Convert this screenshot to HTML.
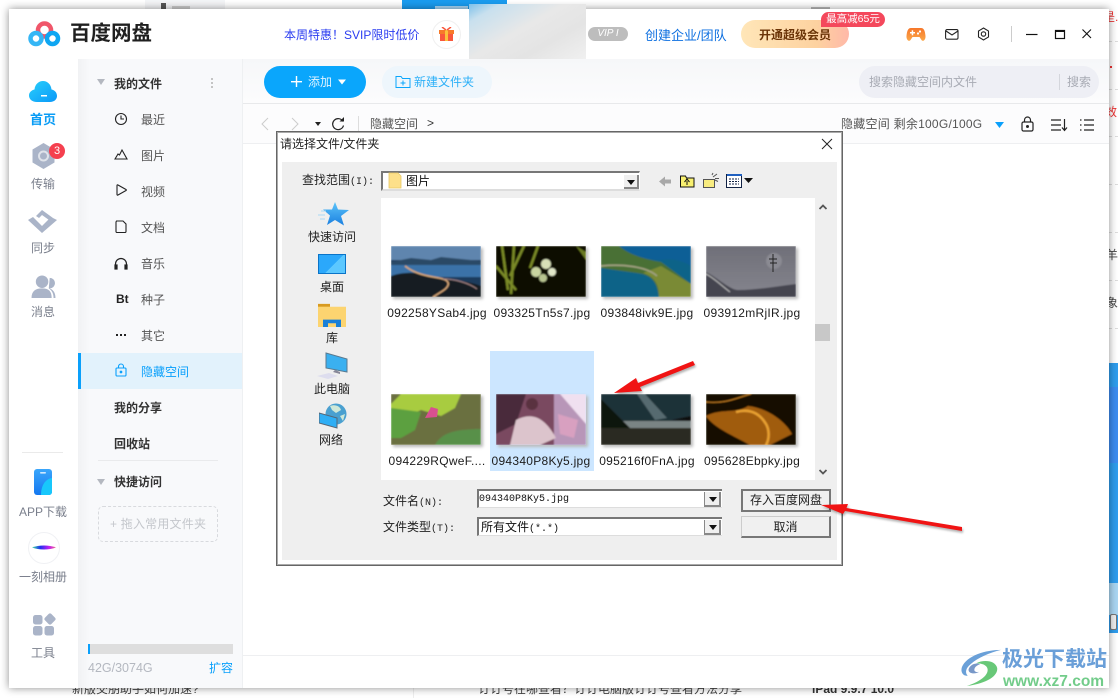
<!DOCTYPE html>
<html><head><meta charset="utf-8"><style>
html,body{margin:0;padding:0;width:1118px;height:698px;overflow:hidden;background:#fff;font-family:"Liberation Sans","Noto Sans CJK SC",sans-serif}
div,span,svg{position:absolute}
tt{font:10px/16px "Liberation Mono",monospace}
.t{white-space:nowrap;font-size:12px;line-height:16px;color:#444}
.n{color:#7a7f8c;text-align:center;width:68px;left:9px}
.m{left:141px;color:#555}
.b{font-weight:700;color:#333}
.d{color:#222}
.c{font-size:12px;color:#222;white-space:nowrap;line-height:16px;text-align:center;width:104px}
.f{letter-spacing:.28px;color:#1c1c1c}
.th{width:90px;height:51px;box-shadow:2px 2px 3px #bbb}
</style></head><body>
<svg width="0" height="0" style="left:0;top:0"><defs><filter id="bl" x="-5%" y="-5%" width="110%" height="110%"><feGaussianBlur stdDeviation=".8"/></filter></defs></svg>
<!-- behind window -->
<div style="left:145px;top:0;width:80px;height:9px;background:#f4f5f7"></div>
<div style="left:161px;top:3px;width:5px;height:6px;background:#555"></div>
<div style="left:172px;top:6px;width:18px;height:3px;background:#ccc"></div>
<div style="left:402px;top:0;width:105px;height:9px;background:#1a9cf0"></div>
<div style="left:435px;top:6px;width:33px;height:3px;background:#a8d8f8"></div>
<div style="left:811px;top:7px;width:19px;height:2px;background:#bbb"></div>
<div style="left:413px;top:688px;width:1px;height:10px;background:#eee"></div>
<div class="t" style="left:72px;top:681px;color:#444">新版交朋助手如何加速?</div>
<div class="t" style="left:478px;top:681px;color:#444">订订号在哪查看？订订电脑版订订号查看方法分享</div>
<div class="t" style="left:812px;top:681px;color:#333;font-weight:700">iPad 9.9.7 10.0</div>
<div style="left:1109px;top:363px;width:9px;height:270px;background:#2f9ded"></div>
<div style="left:1109px;top:387px;width:9px;height:76px;background:#3c8cf0"></div>
<div style="left:1109px;top:583px;width:9px;height:32px;background:#a9d6f2"></div>
<div style="left:1110px;top:614px;width:7px;height:16px;background:#eee;border:1px solid #777;box-sizing:border-box;border-radius:2px"></div>
<div class="t" style="left:1109px;top:9px;color:#e33;width:9px;overflow:hidden;text-indent:-6px">是..</div>
<div style="left:1110px;top:66px;width:2px;height:2px;background:#e33"></div>
<div class="t" style="left:1109px;top:104px;color:#e33;width:9px;overflow:hidden;text-indent:-4px">效.</div>
<div class="t" style="left:1109px;top:247px;color:#444;width:9px;overflow:hidden;text-indent:-3px">羊</div>
<div class="t" style="left:1109px;top:295px;color:#444;width:9px;overflow:hidden;text-indent:-3px">象</div>
<div style="left:1109px;top:41px;width:9px;border-top:1px dashed #ddd"></div>
<div style="left:1109px;top:89px;width:9px;border-top:1px dashed #ddd"></div>
<div style="left:1109px;top:136px;width:9px;border-top:1px dashed #ddd"></div>
<div style="left:1109px;top:184px;width:9px;border-top:1px dashed #ddd"></div>
<div style="left:1109px;top:232px;width:9px;border-top:1px dashed #ddd"></div>
<div style="left:1109px;top:280px;width:9px;border-top:1px dashed #ddd"></div>
<div style="left:1109px;top:328px;width:9px;border-top:1px dashed #ddd"></div>

<!-- window -->
<div style="left:9px;top:9px;width:1100px;height:679px;background:#fff;box-shadow:0 0 8px rgba(0,0,0,.45)"></div>
<div style="left:78px;top:59px;width:165px;height:629px;background:linear-gradient(90deg,#f1f2f4 0,#f8f9fb 12px,#f8f9fb 100%)"></div>
<div style="left:243px;top:59px;width:866px;height:44px;background:linear-gradient(#f6f7f9,#fcfcfd)"></div>
<div style="left:242px;top:59px;width:1px;height:629px;background:#eef0f2"></div>
<div style="left:243px;top:103px;width:866px;height:1px;background:#e8e9eb"></div>
<div style="left:243px;top:104px;width:866px;height:39px;background:#fcfcfd"></div>
<div style="left:243px;top:143px;width:866px;height:1px;background:#eeeff1"></div>
<div style="left:243px;top:655px;width:866px;height:1px;background:#eeeff1"></div>

<!-- header -->
<svg style="left:28px;top:21px" width="33" height="26" viewBox="0 0 33 26" fill="none">
<circle cx="16.500" cy="9" r="6.500" stroke="#f0566a" stroke-width="4.500"/>
<circle cx="8" cy="17.500" r="5.500" stroke="#35b6f5" stroke-width="4.500"/>
<circle cx="24.500" cy="17.500" r="5.500" stroke="#0fa6f2" stroke-width="4.500"/>
</svg>
<div class="t" style="left:70px;top:20px;font-size:20.500px;line-height:28px;font-weight:700;color:#1f1f1f">百度网盘</div>
<div class="t" style="left:284px;top:27px;color:#2a3cf0;">本周特惠！SVIP限时低价</div>
<div style="left:432px;top:20px;width:27px;height:27px;border:1px solid #f0f0f0;border-radius:50%"></div>
<svg style="left:439px;top:27px" width="15" height="14" viewBox="0 0 15 14"><rect x="0" y="3" width="15" height="4" fill="#f77a2a"/><rect x="1" y="7" width="13" height="7" fill="#f9583c"/><rect x="6" y="3" width="3" height="11" fill="#fbc13c"/><path d="M3 0l4 3M12 0L8 3" stroke="#f9583c" stroke-width="1.500"/></svg>
<div style="left:469px;top:4px;width:117px;height:55px;background:linear-gradient(150deg,#7cc0ea 0,#c8e0ee 15%,#e8e8e8 45%,#e4e4e4 70%,#f0f0f0 100%)"></div>
<div style="left:588px;top:27px;width:40px;height:14px;border-radius:7px;background:#bdbdbd;color:#fff;font-size:10px;line-height:14px;text-align:center;font-style:italic">VIP I</div>
<div class="t" style="left:645px;top:28px;color:#0d6fe0;font-size:13px">创建企业/团队</div>
<div style="left:741px;top:20px;width:108px;height:28px;border-radius:14px;background:linear-gradient(90deg,#ffe6b8,#fdd2a0 70%,#ffb8a8)"></div>
<div class="t" style="left:759px;top:27px;color:#6b3407;font-weight:700">开通超级会员</div>
<div style="left:821px;top:12px;width:64px;height:15px;border-radius:8px 8px 8px 0;background:#f4485c;color:#fff;font-size:10.500px;line-height:15px;text-align:center">最高减65元</div>
<svg style="left:906px;top:28px" width="20" height="14" viewBox="0 0 20 14"><defs><linearGradient id="gp" x1="0" y1="0" x2="0" y2="1"><stop offset="0" stop-color="#f6762a"/><stop offset="1" stop-color="#fba84a"/></linearGradient></defs><path d="M5 0h10c3 0 4 3 4.500 8 .3 4-2.500 6-4 4l-2-3H6.500l-2 3c-1.500 2-4.300 0-4-4C1 3 2 0 5 0z" fill="url(#gp)"/><circle cx="14" cy="3.500" r="1.100" fill="#fff"/><circle cx="12" cy="5.500" r="1.100" fill="#fff"/><rect x="4" y="4" width="5" height="1.500" fill="#fff"/><rect x="5.700" y="2.300" width="1.500" height="5" fill="#fff"/></svg>
<svg style="left:945px;top:29px" width="14" height="11" viewBox="0 0 14 11" fill="none" stroke="#222" stroke-width="1.100"><rect x=".6" y=".6" width="12.400" height="9.600" rx="1.500"/><path d="M1 2l6 4 6-4"/></svg>
<svg style="left:977px;top:27px" width="13" height="14" viewBox="0 0 13 14" fill="none" stroke="#222" stroke-width="1.100"><path d="M6.500 1l5 3v6l-5 3-5-3V4z"/><circle cx="6.500" cy="7" r="2.200"/></svg>
<div style="left:1011px;top:26px;width:1px;height:16px;background:#ccc"></div>
<svg style="left:1026px;top:25px" width="70" height="18" viewBox="0 0 70 18" fill="none" stroke="#111"><path d="M0 9.500h11.500" stroke-width="1.200"/><rect x="29.500" y="5.500" width="9" height="8" stroke-width="1.200"/><path d="M29 6h10" stroke-width="2"/><path d="M56.500 4.500l8.500 8.500M65 4.500l-8.500 8.500" stroke-width="1.100"/></svg>

<!-- left nav -->
<svg style="left:28px;top:80px" width="30" height="26" viewBox="0 0 30 26"><defs><linearGradient id="g1" x1="0" y1="0" x2="1" y2="1"><stop offset="0" stop-color="#2ad0fb"/><stop offset="1" stop-color="#0a98f8"/></linearGradient></defs><path d="M8 22C3 22 0 19 0 15.500S3 10 5.500 9.500C6 4 10 1 14 1s8 3 8.500 8.500C25.500 10 28 12.500 28 16s-3 6-7 6z" fill="url(#g1)" transform="translate(1 0)"/><rect x="13" y="15" width="6" height="1.500" fill="#fff"/></svg>
<div class="t n b" style="top:112px;color:#0a9cf5;font-size:13px">首页</div>
<svg style="left:32px;top:143px" width="23" height="26" viewBox="0 0 22 26"><path d="M11 0l11 6.500v13L11 26 0 19.500v-13z" fill="#aab4c8"/><circle cx="11" cy="13" r="4.500" fill="none" stroke="#dfe3ea" stroke-width="2"/></svg>
<div style="left:49px;top:143px;width:16px;height:16px;border-radius:50%;background:#f5404f;color:#fff;font-size:11px;line-height:16px;text-align:center">3</div>
<div class="t n" style="top:176px">传输</div>
<svg style="left:28px;top:210px" width="29" height="23" viewBox="0 0 29 23"><path d="M0 10l5-3 9 9 9-9 6 3-15 13z M8 6l6-6 11 8-4 2-7-5-3 3z" fill="#aab4c8"/></svg>
<div class="t n" style="top:240px">同步</div>
<svg style="left:30px;top:275px" width="27" height="23" viewBox="0 0 27 24" fill="#aab4c8"><circle cx="12" cy="7" r="6.500"/><path d="M1 24c0-7 4-10 11-10s10 3 10 10z"/><path d="M20 3a5.500 5.500 0 010 11c3 1 6 4 6 10h-2c0-5-2-8-5-10z"/></svg>
<div class="t n" style="top:304px">消息</div>
<div style="left:22px;top:452px;width:41px;height:1px;background:#eaeaea"></div>
<svg style="left:34px;top:469px" width="18" height="26" viewBox="0 0 18 26"><defs><linearGradient id="g2" x1="0" y1="0" x2="0" y2="1"><stop offset="0" stop-color="#3aa6fb"/><stop offset="1" stop-color="#1477f0"/></linearGradient></defs><rect width="18" height="26" rx="3" fill="url(#g2)"/><path d="M18 9v14a3 3 0 01-3 3H7c0-9 4-16 11-17z" fill="#18c7fb"/><rect x="6" y="3" width="6" height="1.600" rx=".8" fill="#cfe8ff"/></svg>
<div class="t n" style="top:504px">APP下载</div>
<div style="left:28px;top:532px;width:30px;height:30px;border-radius:50%;border:1px solid #f0f1f4;background:#fff"></div>
<svg style="left:31px;top:544px" width="26" height="7" viewBox="0 0 26 8" preserveAspectRatio="none"><defs><linearGradient id="g3"><stop offset="0" stop-color="#3ce0a0"/><stop offset=".35" stop-color="#2030f0"/><stop offset=".7" stop-color="#c020f0"/><stop offset="1" stop-color="#f06090"/></linearGradient></defs><path d="M1 4C8 1 18 1 25 4 18 7 8 7 1 4z" fill="url(#g3)"/></svg>
<div class="t n" style="top:569px">一刻相册</div>
<svg style="left:32px;top:613px" width="24" height="24" viewBox="0 0 24 24" fill="#aab4c8"><rect x="1" y="2" width="9.500" height="9.500" rx="2.500"/><rect x="1" y="13" width="9.500" height="9.500" rx="2.500"/><rect x="12.500" y="13" width="9.500" height="9.500" rx="2.500"/><rect x="13.500" y="1.500" width="9" height="9" rx="2" transform="rotate(45 18 6)"/></svg>
<div class="t n" style="top:645px">工具</div>

<!-- sidebar -->
<svg style="left:97px;top:79px" width="8" height="6"><path d="M0 0h8L4 6z" fill="#b4b8c0"/></svg>
<div class="t b" style="left:114px;top:76px">我的文件</div>
<div style="left:211px;top:78px;width:2px;height:2px;background:#c4c4c4;box-shadow:0 4px #c4c4c4,0 8px #c4c4c4"></div>
<svg style="left:114px;top:112px" width="14" height="14" fill="none" stroke="#222" stroke-width="1.100"><circle cx="7" cy="7" r="5.500"/><path d="M7 3.500V7h3"/></svg>
<div class="t m" style="top:112px">最近</div>
<svg style="left:114px;top:148px" width="14" height="13" fill="none" stroke="#222" stroke-width="1.100"><path d="M1 11L4 6l1.500 1L8 2l5 9z"/></svg>
<div class="t m" style="top:148px">图片</div>
<svg style="left:116px;top:184px" width="12" height="13" fill="none" stroke="#222" stroke-width="1.100"><path d="M1 1.500c0-.6.500-.8 1-.5l8 4.500c.5.300.5.800 0 1L2 11c-.5.300-1 .1-1-.5z"/></svg>
<div class="t m" style="top:184px">视频</div>
<svg style="left:115px;top:220px" width="12" height="13" fill="none" stroke="#222" stroke-width="1.100"><path d="M1.500 1H8l3 3v7.500a1 1 0 01-1 1H2a1 1 0 01-1-1V2z"/></svg>
<div class="t m" style="top:220px">文档</div>
<svg style="left:114px;top:257px" width="14" height="13" fill="none" stroke="#222" stroke-width="1.200"><path d="M1.500 9V7a5.500 5.500 0 0111 0v2"/><rect x="1" y="8" width="2" height="4" fill="#222"/><rect x="11" y="8" width="2" height="4" fill="#222"/></svg>
<div class="t m" style="top:256px">音乐</div>
<div class="t" style="left:116px;top:291px;color:#222;font-weight:700;font-size:12px">Bt</div>
<div class="t m" style="top:292px">种子</div>
<div style="left:116px;top:334px;width:2px;height:2px;background:#222;box-shadow:4px 0 #222,8px 0 #222"></div>
<div class="t m" style="top:328px">其它</div>
<div style="left:78px;top:353px;width:164px;height:36px;background:#e2f2fc"></div>
<div style="left:78px;top:353px;width:3px;height:36px;background:#0aa0fb"></div>
<svg style="left:115px;top:363px" width="12" height="14" fill="none" stroke="#0aa0fb" stroke-width="1.100"><rect x="1" y="5" width="10" height="8" rx="1"/><path d="M3.500 5V3.500a2.500 2.500 0 015 0V5"/><circle cx="6" cy="9" r=".8" fill="#0aa0fb"/></svg>
<div class="t m" style="top:364px;color:#0aa0fb">隐藏空间</div>
<div class="t b" style="left:114px;top:400px">我的分享</div>
<div class="t b" style="left:114px;top:436px">回收站</div>
<div style="left:98px;top:460px;width:120px;height:1px;background:#e9eaec"></div>
<svg style="left:97px;top:479px" width="8" height="6"><path d="M0 0h8L4 6z" fill="#b4b8c0"/></svg>
<div class="t b" style="left:114px;top:474px">快捷访问</div>
<div style="left:98px;top:506px;width:118px;height:34px;border:1px dashed #d8dade;border-radius:5px"></div>
<div class="t" style="left:110px;top:516px;color:#c4c7cc;letter-spacing:.2px">+ 拖入常用文件夹</div>
<div style="left:88px;top:644px;width:145px;height:10px;background:#dedede"></div>
<div style="left:88px;top:644px;width:2px;height:10px;background:#0aa0fb"></div>
<div class="t" style="left:88px;top:660px;color:#b4b8c0;font-size:12.500px">42G/3074G</div>
<div class="t" style="left:209px;top:660px;color:#0aa0fb">扩容</div>

<!-- toolbar -->
<div style="left:264px;top:66px;width:102px;height:32px;border-radius:16px;background:#0aa6fc"></div>
<svg style="left:290px;top:74px" width="60" height="16" fill="#fff"><rect x="1" y="7" width="11" height="1.400"/><rect x="5.800" y="2" width="1.400" height="11"/><path d="M48 5.500h8l-4 5z"/></svg>
<div class="t" style="left:308px;top:74px;color:#dff3ff">添加</div>
<div style="left:382px;top:66px;width:110px;height:32px;border-radius:16px;background:#eef6fc"></div>
<svg style="left:395px;top:74px" width="16" height="15" fill="none" stroke="#0aa6fc"><path d="M1 2.500h5l1.500 2h7.500v9H1z"/><path d="M8 6.500v5M5.500 9h5"/></svg>
<div class="t" style="left:414px;top:74px;color:#2cb0f8">新建文件夹</div>
<div style="left:859px;top:66px;width:240px;height:32px;border-radius:16px;background:#eeeff5"></div>
<div class="t" style="left:869px;top:74px;color:#a8abb4">搜索隐藏空间内文件</div>
<div style="left:1059px;top:74px;width:1px;height:16px;background:#d4d6dc"></div>
<div class="t" style="left:1067px;top:74px;color:#a8abb4">搜索</div>
<svg style="left:258px;top:116px" width="90" height="16" fill="none"><path d="M10 2L4 8l6 6" stroke="#ccc"/><path d="M34 2l6 6-6 6" stroke="#ccc"/><path d="M57 6h6l-3 4z" fill="#222"/><path d="M85 5.500a5.500 5.500 0 10.500 4" stroke="#222" stroke-width="1.200"/><path d="M81.500 5.500h4.500V1z" fill="#222"/></svg>
<div style="left:358px;top:116px;width:1px;height:15px;background:#ddd"></div>
<div class="t" style="left:370px;top:116px;color:#555">隐藏空间</div>
<div class="t" style="left:427px;top:115px;color:#333">&gt;</div>
<div class="t" style="left:841px;top:116px;color:#555;letter-spacing:.25px">隐藏空间 剩余100G/100G</div>
<svg style="left:995px;top:122px" width="9" height="6"><path d="M0 0h9L4.500 6z" fill="#0aa0fb"/></svg>
<svg style="left:1021px;top:116px" width="13" height="16" fill="none" stroke="#222" stroke-width="1.200"><rect x="1" y="6" width="11" height="9" rx="1.500"/><path d="M3.500 6V4a3 3 0 016 0v2"/><circle cx="6.500" cy="10.500" r=".9" fill="#222"/></svg>
<svg style="left:1051px;top:118px" width="17" height="14" fill="none" stroke="#222" stroke-width="1.200"><path d="M0 2h10M0 7h10M0 12h10M13.500 1v11M11 9.500l2.500 3 2.500-3"/></svg>
<svg style="left:1080px;top:118px" width="14" height="14" fill="none" stroke="#222" stroke-width="1.200"><path d="M4 2h10M4 7h10M4 12h10M0 2h1.500M0 7h1.500M0 12h1.500"/></svg>

<!-- dialog -->
<div style="left:276px;top:131px;width:567px;height:435px;background:#fff;border:1px solid #666;box-sizing:border-box;box-shadow:inset 0 0 0 1px #aaa"></div>
<div class="t" style="left:280px;top:136px;color:#222">请选择文件/文件夹</div>
<svg style="left:821px;top:138px" width="12" height="12" fill="none" stroke="#222"><path d="M1 1l10 10M11 1L1 11"/></svg>
<div style="left:282px;top:162px;width:555px;height:398px;background:#efefef"></div>
<div class="t d" style="left:302px;top:172px">查找范围<tt>(I):</tt></div>
<div style="left:381px;top:171px;width:259px;height:20px;background:#fff;border-top:2px solid #777;border-left:2px solid #777;border-right:1px solid #fff;border-bottom:2px solid #ddd;box-sizing:border-box"></div>
<svg style="left:388px;top:172px" width="14" height="18"><path d="M1 1h9l3 3v12H1z" fill="#fde08a" stroke="#e8c864" stroke-width=".8"/></svg>
<div class="t" style="left:406px;top:173px;color:#111">图片</div>
<div style="left:624px;top:175px;width:15px;height:14px;background:#efefef;border:1px solid #888;border-width:0 2px 2px 0;box-sizing:border-box"></div>
<svg style="left:627px;top:180px" width="8" height="5"><path d="M0 0h8L4 5z" fill="#111"/></svg>
<svg style="left:658px;top:172px" width="100" height="18"><path d="M1 9.500l6-5v3h6v4H7v3z" fill="#a8a8a8"/><path d="M22.500 4h5l1 2h7.500v9h-13.500z" fill="#f8f070" stroke="#111"/><path d="M29 13v-4M26.500 10l2.500-3 2.500 3" stroke="#111" fill="none"/><path d="M45.500 7.500h11v8h-11z" fill="#f8ec80" stroke="#555"/><path d="M55 5l4-3M57 6.500l4 0M54 3l1-2M57 8l3 1.500" stroke="#555"/><rect x="68.500" y="2.500" width="15" height="13" fill="#fff" stroke="#124"/><rect x="69" y="2" width="15" height="2" fill="#2060c0"/><path d="M71 7h10M71 9.500h10M71 12h10" stroke="#124" stroke-dasharray="2 1"/><path d="M86 6h9l-4.500 5z" fill="#111"/></svg>

<svg style="left:318px;top:201px" width="32" height="26" viewBox="0 0 32 26"><defs><linearGradient id="s" x1="0" y1="0" x2="0" y2="1"><stop offset="0" stop-color="#5cc4fa"/><stop offset="1" stop-color="#1a7fe0"/></linearGradient></defs><path d="M17 1l3 7.500 11 .5-8 6 3 9.500-9-5.500-8 5 3-9.500-7-6h9z" fill="url(#s)"/><path d="M0 14h7M2 18h5M3 10h5" stroke="#a8d8f5"/></svg>
<div class="c" style="left:280px;top:229px">快速访问</div>
<div style="left:318px;top:254px;width:28px;height:20px;box-sizing:border-box;background:linear-gradient(135deg,#2ba8fb 55%,#5cc8ff 55%);border:1px solid #0a74c8"></div>
<div class="c" style="left:280px;top:279px">桌面</div>
<svg style="left:318px;top:303px" width="28" height="24" viewBox="0 0 28 26" preserveAspectRatio="none"><path d="M0 1h12v3h16v23H0z" fill="#fcd470"/><rect x="0" y="1" width="12" height="3" fill="#d89a20"/><path d="M5 26V18h18v8h-5v-4h-8v4z" fill="#1a80d8"/></svg>
<div class="c" style="left:280px;top:330px">库</div>
<svg style="left:316px;top:352px" width="32" height="28" viewBox="0 0 32 28"><path d="M10 1l21 6v13L10 16z" fill="#3ab0f0" stroke="#5a7a90"/><path d="M19 18l5 2v2l-7-2z" fill="#889"/><path d="M1 24l12-3 9 3-10 3z" fill="#dde"/></svg>
<div class="c" style="left:280px;top:381px">此电脑</div>
<svg style="left:319px;top:403px" width="28" height="28" viewBox="0 0 28 28"><circle cx="17" cy="11" r="10.500" fill="#4aa0d0"/><path d="M11 3c5-2 10 0 11 4l-5 3-4-3zM21 13l5-2-2 7z" fill="#cfe8d8"/><path d="M0 10l18 5v10L0 20z" fill="#2eaef5" stroke="#567"/></svg>
<div class="c" style="left:279px;top:432px">网络</div>

<div style="left:381px;top:198px;width:434px;height:282px;background:#fff"></div>
<svg style="left:819px;top:204px" width="8" height="6" fill="none" stroke="#555" stroke-width="1.800"><path d="M.5 5L4 1.500 7.500 5"/></svg>
<svg style="left:819px;top:469px" width="8" height="6" fill="none" stroke="#555" stroke-width="1.800"><path d="M.5 1L4 4.500 7.500 1"/></svg>
<div style="left:815px;top:324px;width:15px;height:17px;background:#c8c8c8"></div>

<div style="left:490px;top:351px;width:104px;height:120px;background:#cce6ff"></div>
<!-- row 1 thumbs -->
<svg class="th" style="left:391px;top:246px" viewBox="0 0 90 51"><g filter="url(#bl)"><rect width="90" height="51" fill="#1d3a5c"/><rect width="90" height="14" fill="#5f85ae"/><path d="M0 16l20-4 20 2 10-3 20 2 20 2v6H0z" fill="#2a4866"/><rect y="19" width="90" height="12" fill="#3a72a8"/><path d="M0 51V30c15-5 30-4 45 2 15 3 30 2 45 8v11z" fill="#121c22"/><path d="M14 20c10 8 22 10 34 12 12 2 12 8 2 14l-8 5" stroke="#d9a878" stroke-width="1.600" fill="none"/><path d="M52 33c12 0 26 4 34 10" stroke="#a88" stroke-width="1" fill="none"/></g></svg>
<svg class="th" style="left:496px;top:246px" viewBox="0 0 90 51"><g filter="url(#bl)"><rect width="90" height="51" fill="#0a0d04"/><path d="M6 0l6 44M18 0l-3 48M28 0L14 30M42 0l-8 22M0 20l20 24" stroke="#7a8a28" stroke-width="2.500"/><circle cx="50" cy="18" r="5" fill="#d8e0b8"/><circle cx="40" cy="26" r="5" fill="#c8d4a0"/><circle cx="56" cy="26" r="4" fill="#e0e6c8"/><circle cx="47" cy="32" r="4" fill="#b8c490"/><path d="M80 0l10 6v8z" fill="#6a7a20"/></g></svg>
<svg class="th" style="left:601px;top:246px" viewBox="0 0 90 51"><g filter="url(#bl)"><rect width="90" height="51" fill="#0e6488"/><path d="M18 0h72v20C80 14 70 12 60 14 44 14 30 10 18 0z" fill="#0a5f96"/><path d="M0 0h18c12 10 30 14 42 16l30 22v13H58c-2-14-6-22-22-24L0 22z" fill="#4a7034"/><path d="M58 51c0-12-4-20-16-24L60 20l30 18v13z" fill="#7a8a34"/><path d="M0 20c20-2 45 0 56 10" stroke="#a0a080" stroke-width="1.800" fill="none"/></g></svg>
<svg class="th" style="left:706px;top:246px" viewBox="0 0 90 51"><defs><linearGradient id="t4" x1="0" y1="0" x2="0" y2="1"><stop offset="0" stop-color="#6f6f78"/><stop offset="1" stop-color="#85858e"/></linearGradient></defs><g filter="url(#bl)"><rect width="90" height="51" fill="url(#t4)"/><path d="M0 26c12 6 24 18 32 18 20 0 40-4 58-6v13H0z" fill="#45454f"/><path d="M0 28c8 4 16 12 24 18" stroke="#bbb" fill="none"/><circle cx="68" cy="15" r="8" fill="#8a8a92"/></g><path d="M67 8v18M63 13h8M64 17h7" stroke="#222"/></svg>
<!-- row 2 thumbs -->
<svg class="th" style="left:391px;top:394px" viewBox="0 0 90 51"><g filter="url(#bl)"><rect width="90" height="51" fill="#6a7040"/><path d="M10 0h60l-6 14-14 8-20-6L0 30V10z" fill="#a8cc40"/><path d="M0 14l30 4-6 18-14 8H0z" fill="#5ca040"/><path d="M44 51c6-12 20-16 46-16v16z" fill="#58904a"/></g><path d="M40 13l7 2-1 8-12 1z" fill="#d85090"/></svg>
<svg class="th" style="left:496px;top:394px" viewBox="0 0 90 51"><g filter="url(#bl)"><rect width="90" height="51" fill="#7a4a60"/><rect x="58" width="32" height="51" fill="#b896b8"/><path d="M0 0h30l-10 30L0 40z" fill="#4a2a3a"/><path d="M20 26c15-8 28-4 40 18l-16 7H14z" fill="#dcc4cc"/><circle cx="36" cy="10" r="6" fill="#5a3040"/><path d="M64 0h26v30z" fill="#f0e0f0"/><path d="M62 20l20 6-4 18-14-4z" fill="#d8a0c0"/></g></svg>
<svg class="th" style="left:601px;top:394px" viewBox="0 0 90 51"><g filter="url(#bl)"><rect width="90" height="51" fill="#1c3038"/><path d="M44 0l22 24-12 2L36 0z" fill="#566a70"/><rect y="27" width="90" height="7" fill="#7a8484"/><path d="M0 5l30 30H0z" fill="#111510"/><path d="M70 26l20-4v5z" fill="#111"/><rect y="34" width="90" height="17" fill="#2a2a24"/></g></svg>
<svg class="th" style="left:706px;top:394px" viewBox="0 0 90 51"><g filter="url(#bl)"><rect width="90" height="51" fill="#140804"/><path d="M0 22C15 14 30 20 42 12c20 2 38 16 44 28l-22 11H44C28 42 8 34 0 22z" fill="#a05c10"/><path d="M30 18c15-4 24 2 30 12 3 5 4 14 0 21" stroke="#e8a030" stroke-width="2.500" fill="none"/><path d="M0 8c20 2 30-4 45-8" stroke="#c88020" fill="none"/></g></svg>

<div class="c f" style="left:385px;top:305px">092258YSab4.jpg</div>
<div class="c f" style="left:490px;top:305px">093325Tn5s7.jpg</div>
<div class="c f" style="left:595px;top:305px">093848ivk9E.jpg</div>
<div class="c f" style="left:700px;top:305px">093912mRjIR.jpg</div>
<div class="c f" style="left:385px;top:453px">094229RQweF....</div>
<div class="c f" style="left:489px;top:453px">094340P8Ky5.jpg</div>
<div class="c f" style="left:595px;top:453px">095216f0FnA.jpg</div>
<div class="c f" style="left:700px;top:453px">095628Ebpky.jpg</div>

<div class="t d" style="left:383px;top:493px">文件名<tt>(N):</tt></div>
<div class="t d" style="left:383px;top:519px">文件类型<tt>(T):</tt></div>
<div style="left:477px;top:489px;width:245px;height:19px;background:#fff;border-top:2px solid #777;border-left:2px solid #777;border-bottom:1px solid #ddd;box-sizing:border-box"></div>
<div class="t" style="left:479px;top:492px;color:#111;font-size:10px;font-family:'Liberation Mono',monospace">094340P8Ky5.jpg</div>
<div style="left:477px;top:517px;width:245px;height:19px;background:#fff;border-top:2px solid #777;border-left:2px solid #777;border-bottom:1px solid #ddd;box-sizing:border-box"></div>
<div class="t" style="left:481px;top:519px;color:#111">所有文件<tt>(*.*)</tt></div>
<div style="left:704px;top:492px;width:17px;height:15px;background:#efefef;border:1px solid #888;border-width:0 2px 2px 1px;box-sizing:border-box"></div>
<svg style="left:709px;top:497px" width="8" height="5"><path d="M0 0h8L4 5z" fill="#111"/></svg>
<div style="left:704px;top:520px;width:17px;height:15px;background:#efefef;border:1px solid #888;border-width:0 2px 2px 1px;box-sizing:border-box"></div>
<svg style="left:709px;top:525px" width="8" height="5"><path d="M0 0h8L4 5z" fill="#111"/></svg>
<div style="left:741px;top:489px;width:90px;height:23px;background:#f0f0f0;border:2px solid #777;box-sizing:border-box;color:#222;font-size:12px;line-height:19px;text-align:center">存入百度网盘</div>
<div style="left:741px;top:516px;width:90px;height:22px;background:#f0f0f0;border:1px solid #ccc;border-right:2px solid #777;border-bottom:2px solid #777;box-sizing:border-box;color:#222;font-size:12px;line-height:20px;text-align:center">取消</div>

<!-- arrows -->
<svg style="left:600px;top:350px;filter:drop-shadow(1px 2px 1px rgba(0,0,0,.3))" width="110" height="50"><path d="M14 43L36 28l2 5 55-22 2 4-55 22 2 4z" fill="#f01414"/></svg>
<svg style="left:815px;top:495px;filter:drop-shadow(1px 2px 1px rgba(0,0,0,.3))" width="155" height="40"><path d="M6 10l27-1-1.500 4L147 32v4L30 16l-2 3z" fill="#f01414"/></svg>

<!-- watermark -->
<svg style="left:959px;top:648px" width="44" height="40" viewBox="0 0 46 42" fill="none"><path d="M44 2C28 2 8 8 3 20c-2 6 2 10 6 9-3-3-2-8 3-12 8-7 20-12 32-15z" fill="#6aa0d8"/><path d="M18 16c8-4 20-3 22 5 1 8-10 16-32 19 12-4 22-10 22-17 0-5-6-7-12-7z" fill="#68c878"/><path d="M10 22c2-5 8-7 12-5-3 1-6 3-6 6 0 2 3 3 5 2-4 3-12 2-11-3z" fill="#7898c8"/></svg>
<div class="t" style="left:1002px;top:647px;font-size:21px;line-height:26px;font-weight:700;color:#6a9fd8">极光下载站</div>
<div class="t" style="left:1003px;top:674px;font-size:15.500px;line-height:16px;font-weight:700;color:#72cc8a">www.xz7.com</div>
</body></html>
